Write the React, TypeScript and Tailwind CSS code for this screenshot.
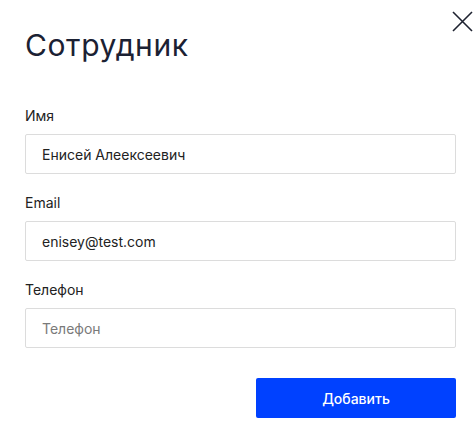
import React from "react";

function Field({ label, value, placeholder }: { label: string; value?: string; placeholder?: string }) {
  return (
    <div className="flex flex-col">
      <label className="text-[14px] leading-[20px] text-[#222222] mb-2">{label}</label>
      <input
        readOnly
        defaultValue={value}
        placeholder={placeholder}
        className="h-[40px] w-full border border-[#dcdcdc] rounded-[2px] px-4 text-[14px] text-[#222222] placeholder:text-[#7a7a7a] outline-none bg-white"
        style={{ fontFamily: "Inter, 'Noto Sans', sans-serif" }}
      />
    </div>
  );
}

export default function App() {
  return (
    <div
      className="relative w-[476px] h-[432px] bg-white pl-[25px] pr-[20px] pt-[28px]"
      style={{ fontFamily: "Inter, 'Noto Sans', sans-serif" }}
    >
      <button className="absolute top-[11px] right-[3px] w-[21px] h-[21px] text-[#1e2230]">
        <svg viewBox="0 0 21 21" width="21" height="21" fill="none" stroke="currentColor" strokeWidth="1.6">
          <path d="M1 1L20 20M20 1L1 20" />
        </svg>
      </button>
      <h1 className="text-[30px] leading-[34px] tracking-[0.6px] text-[#1b2133] font-normal">Сотрудник</h1>
      <div className="mt-[44px] flex flex-col gap-[19px]">
        <Field label="Имя" value="Енисей Алеексеевич" />
        <Field label="Email" value="enisey@test.com" />
        <Field label="Телефон" placeholder="Телефон" />
      </div>
      <div className="flex justify-end mt-[30px]">
        <button className="w-[200px] h-[40px] bg-[#0041ff] rounded-[2px] text-white text-[14px] font-medium">
          Добавить
        </button>
      </div>
    </div>
  );
}
